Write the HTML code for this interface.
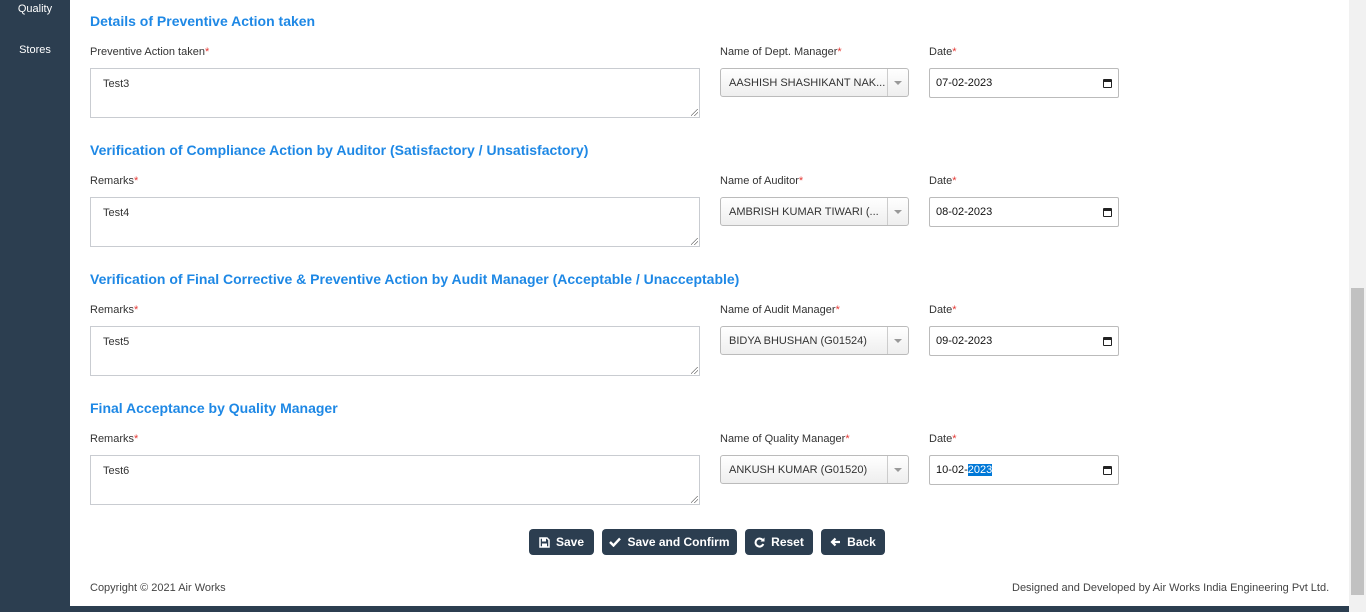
<!DOCTYPE html>
<html><head><meta charset="utf-8"><style>
*{box-sizing:border-box;margin:0;padding:0}
body{width:1366px;height:612px;overflow:hidden;background:#fff;font-family:"Liberation Sans",Arial,sans-serif;position:relative;color:#333}
.side{position:absolute;left:0;top:0;width:70px;height:612px;background:#2c3e50}
.side div{position:absolute;width:70px;text-align:center;color:#fff;font-size:11px}
.bot{position:absolute;left:0;top:606px;width:1349px;height:6px;background:#2c3e50}
.sb{position:absolute;left:1349px;top:0;width:17px;height:612px;background:#f1f1f1}
.thumb{position:absolute;left:1351px;top:288px;width:13px;height:307px;background:#c1c1c1}
h3{position:absolute;left:90px;font-size:14px;font-weight:bold;color:#1e88e5}
.lbl{position:absolute;font-size:11px;color:#333}
.lbl b{color:#e53935;font-weight:normal}
.ta{position:absolute;left:90px;width:610px;height:50px;border:1px solid #c9ccd1;font-size:11px;padding:9px 12px}
.ta:after{content:"";position:absolute;right:1px;bottom:1px;width:7px;height:7px;background:linear-gradient(135deg,transparent 45%,#777 45%,#777 52%,transparent 52%,transparent 70%,#777 70%,#777 77%,transparent 77%)}
.sel{position:absolute;left:720px;width:189px;height:29px;border:1px solid #bbb;border-radius:3px;background:linear-gradient(#fff,#eee);font-size:11px;padding:8px 8px;white-space:nowrap}
.sel:after{content:"";position:absolute;right:0;top:0;width:20px;height:27px;border-left:1px solid #ccc}
.sel i{position:absolute;right:6px;top:12px;border:4px solid transparent;border-top:4px solid #999}
.dt{position:absolute;left:929px;width:190px;height:30px;border:1px solid #bbb;border-radius:2px;font-size:11px;padding:8px 6px;color:#111}
.dt i{position:absolute;right:6px;top:10px;width:9px;height:9px;border:1.5px solid #222;border-top-width:3px;border-radius:1px}
.btn{position:absolute;top:529px;height:26px;background:#2c3e50;color:#fff;border-radius:4px;font-size:12px;font-weight:bold;white-space:nowrap;display:flex;align-items:center;justify-content:center;gap:6px}
.btn svg{display:block}
.ft{position:absolute;top:582px;font-size:11px;color:#444}
</style></head><body>
<div class="side"><div style="top:3px">Quality</div><div style="top:44px">Stores</div></div>

<h3 style="top:13px">Details of Preventive Action taken</h3>
<div class="lbl" style="left:90px;top:46px">Preventive Action taken<b>*</b></div>
<div class="lbl" style="left:720px;top:46px">Name of Dept. Manager<b>*</b></div>
<div class="lbl" style="left:929px;top:46px">Date<b>*</b></div>
<div class="ta" style="top:68px">Test3</div>
<div class="sel" style="top:68px">AASHISH SHASHIKANT NAK...<i></i></div>
<div class="dt" style="top:68px">07-02-2023<i></i></div>

<h3 style="top:142px">Verification of Compliance Action by Auditor (Satisfactory / Unsatisfactory)</h3>
<div class="lbl" style="left:90px;top:175px">Remarks<b>*</b></div>
<div class="lbl" style="left:720px;top:175px">Name of Auditor<b>*</b></div>
<div class="lbl" style="left:929px;top:175px">Date<b>*</b></div>
<div class="ta" style="top:197px">Test4</div>
<div class="sel" style="top:197px">AMBRISH KUMAR TIWARI (...<i></i></div>
<div class="dt" style="top:197px">08-02-2023<i></i></div>

<h3 style="top:271px">Verification of Final Corrective &amp; Preventive Action by Audit Manager (Acceptable / Unacceptable)</h3>
<div class="lbl" style="left:90px;top:304px">Remarks<b>*</b></div>
<div class="lbl" style="left:720px;top:304px">Name of Audit Manager<b>*</b></div>
<div class="lbl" style="left:929px;top:304px">Date<b>*</b></div>
<div class="ta" style="top:326px">Test5</div>
<div class="sel" style="top:326px">BIDYA BHUSHAN (G01524)<i></i></div>
<div class="dt" style="top:326px">09-02-2023<i></i></div>

<h3 style="top:400px">Final Acceptance by Quality Manager</h3>
<div class="lbl" style="left:90px;top:433px">Remarks<b>*</b></div>
<div class="lbl" style="left:720px;top:433px">Name of Quality Manager<b>*</b></div>
<div class="lbl" style="left:929px;top:433px">Date<b>*</b></div>
<div class="ta" style="top:455px">Test6</div>
<div class="sel" style="top:455px">ANKUSH KUMAR (G01520)<i></i></div>
<div class="dt" style="top:455px">10-02-<span style="background:#0078d7;color:#fff">2023</span><i></i></div>

<div class="btn" style="left:529px;width:65px"><svg width="11" height="11" viewBox="0 0 11 11"><path d="M1 1h7l2 2v7H1z" fill="none" stroke="#fff" stroke-width="1.5"/><rect x="3" y="1.5" width="4" height="3" fill="#fff"/><rect x="3" y="6.5" width="5" height="3" fill="#fff"/></svg>Save</div>
<div class="btn" style="left:602px;width:135px"><svg width="12" height="10" viewBox="0 0 12 10"><path d="M1 5l3.5 3.5L11 1.5" fill="none" stroke="#fff" stroke-width="2.4"/></svg>Save and Confirm</div>
<div class="btn" style="left:745px;width:68px"><svg width="11" height="11" viewBox="0 0 11 11"><path d="M9 3.5A4 4 0 1 0 9.3 7" fill="none" stroke="#fff" stroke-width="2"/><path d="M10.5 0.5v4h-4z" fill="#fff"/></svg>Reset</div>
<div class="btn" style="left:821px;width:64px"><svg width="11" height="10" viewBox="0 0 11 10"><path d="M10 5H2M5.5 1.5L2 5l3.5 3.5" fill="none" stroke="#fff" stroke-width="2.2"/></svg>Back</div>

<div class="ft" style="left:90px">Copyright © 2021 Air Works</div>
<div class="ft" style="left:1012px">Designed and Developed by Air Works India Engineering Pvt Ltd.</div>
<div class="bot"></div>
<div class="sb"></div><div class="thumb"></div>
</body></html>
